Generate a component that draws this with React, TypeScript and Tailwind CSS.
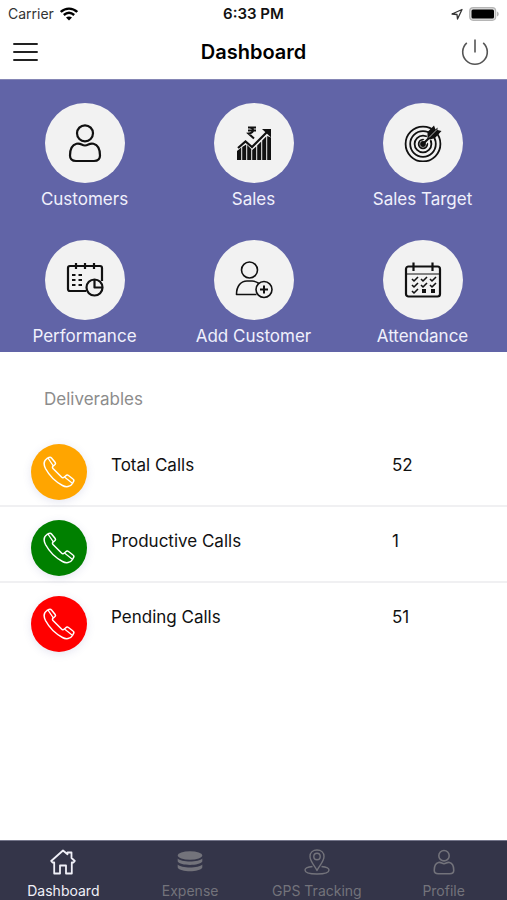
import type { ReactNode } from "react";

function PersonIcon({ size, weight }: { size: number; weight: number }) {
  return (
    <svg width={size} height={size} viewBox="0 0 40 40" fill="none" stroke="currentColor" strokeWidth={weight} strokeLinejoin="round" aria-hidden="true">
      <circle cx="20" cy="10.300" r="8" />
      <path d="M11.500 20.800C16 19.800 16.500 22.500 20 22.500C23.500 22.500 24 19.800 28.500 20.800C33 22 35 27 35 32.500C35 36.500 33 38 29 38H11C7 38 5 36.500 5 32.500C5 27 7 22 11.500 20.800Z" />
    </svg>
  );
}

function SalesIcon() {
  return (
    <svg width="36" height="36" viewBox="0 0 36 36" fill="none" stroke="currentColor" aria-hidden="true">
      <path d="M12 2.500H20M12 5.500H20M13 2.500C18 2 19 8 12.500 8.500L18 13.500" strokeWidth="2" />
      <path d="M2 23L9.500 16.500L16 22L31 7" strokeWidth="2.200" />
      <path d="M26 4H35V12.500Z" fill="currentColor" stroke="none" />
      <path d="M1 26L5.200 22.500V35H1ZM6.200 22L10.200 19.500V35H6.200ZM11.200 20L15.200 24V35H11.200ZM16.200 25L20.200 21.500V35H16.200ZM21.200 20.500L25.200 16.500V35H21.200ZM26.200 15.500L30.200 11.500V35H26.200ZM31.200 11L35 12.500V35H31.200Z" fill="currentColor" stroke="none" />
    </svg>
  );
}

function TargetIcon() {
  return (
    <svg width="38" height="38" viewBox="0 0 38 38" fill="none" stroke="currentColor" strokeWidth="1.800" aria-hidden="true">
      <circle cx="19" cy="20" r="17.400" />
      <circle cx="19" cy="20" r="12.800" />
      <circle cx="19" cy="20" r="8.400" />
      <circle cx="19" cy="20" r="4.300" />
      <path d="M20 19L35 4" stroke="#f2f2f2" strokeWidth="5" />
      <circle cx="19" cy="20" r="2" fill="currentColor" />
      <path d="M19 20L32 7" strokeWidth="2.200" />
      <path d="M23.500 14.500L23.500 8L30 1.500L31.500 5.500L33.500 3.500L33.500 6L37.500 7L31 14L26 15.500Z" fill="currentColor" stroke="none" />
      <path d="M25 13.500L33 5.500" stroke="#f2f2f2" strokeWidth="0.700" />
    </svg>
  );
}

function PerformanceIcon() {
  return (
    <svg width="38" height="36" viewBox="0 0 38 36" fill="none" stroke="currentColor" strokeWidth="2.200" strokeLinejoin="round" aria-hidden="true">
      <path d="M20 29H4Q2 29 2 27V6Q2 4 4 4H34Q36 4 36 6V19" />
      <path d="M10 1V7M19 1V7M28 1V7" />
      <path d="M6 13H9.500M12.500 13H16M6 18H9.500M12.500 18H16M6 23H9.500M12.500 23H16" />
      <circle cx="28.500" cy="25.500" r="8" />
      <path d="M28.500 17.500V25.500H36.500" />
    </svg>
  );
}

function AddCustomerIcon() {
  return (
    <svg width="38" height="38" viewBox="0 0 38 38" fill="none" stroke="currentColor" strokeWidth="1.600" strokeLinejoin="round" aria-hidden="true">
      <circle cx="14.500" cy="9" r="8" />
      <path d="M21.500 33.500H1.500C1.500 25 6 20 12 20H17C19.500 20 22 21 24 22.500" />
      <circle cx="29" cy="28.500" r="8" />
      <path d="M29 24.500V32.500M25 28.500H33" strokeWidth="2" />
    </svg>
  );
}

function AttendanceIcon() {
  return (
    <svg width="38" height="36" viewBox="0 0 38 36" fill="none" stroke="currentColor" strokeWidth="2.200" strokeLinejoin="round" aria-hidden="true">
      <rect x="2" y="4.500" width="34" height="30" rx="2.500" />
      <path d="M9.500 0.500V9M28.500 0.500V9" />
      <path d="M2 12H36" strokeWidth="1.200" />
      <path d="M8 17L10 19L14 15M17 17L19 19L23 15M26 17L28 19L32 15M8 23L10 25L14 21M17 23L19 25L23 21M26 23L28 25L32 21M8 29L10 31L14 27" strokeWidth="1.600" />
      <path d="M18 27H22V31H18ZM27 27H31V31H27Z" fill="currentColor" stroke="none" />
    </svg>
  );
}

function PhoneIcon() {
  return (
    <svg width="32" height="32" viewBox="0 0 32 32" fill="none" stroke="currentColor" strokeWidth="1.500" strokeLinejoin="round" aria-hidden="true">
      <path d="M4 2.500L6 1.500Q7.500 0.800 8.500 2L12.200 6.500Q13 8 11.500 9L10 10.200Q9 11 10 12.500L18.500 21Q20 22.500 21 21.300L22.500 20Q24 18.500 25.500 19.500L30 23Q31.500 24 30.500 25.500L29.500 27.500C27.500 31 23 31.500 19.500 29.500C13 26 6 19 2.500 12.500C0.500 8.500 1 4.500 4 2.500Z" />
      <path d="M5 2.200L10.300 9.800M21.500 21L29.300 27.300" strokeWidth="1.200" />
    </svg>
  );
}

function HomeIcon() {
  return (
    <svg width="26" height="26" viewBox="0 0 26 26" fill="none" stroke="currentColor" strokeWidth="1.800" strokeLinejoin="round" aria-hidden="true">
      <path d="M1.200 12L13 1.500L17.500 5.200V3.500H21.500V9L24.800 12L23.500 13.500H21.800V24.500H16V16.500H10V24.500H4.200V13.500H2.500Z" />
    </svg>
  );
}

function ExpenseIcon() {
  return (
    <svg width="26" height="26" viewBox="0 0 26 26" fill="currentColor" aria-hidden="true">
      <ellipse cx="13" cy="6.500" rx="12.300" ry="4.200" />
      <path d="M0.700 9.500C4 13.500 22 13.500 25.300 9.500V12.500C23 17 3 17 0.700 12.500Z" />
      <path d="M0.700 15.500C4 19.500 22 19.500 25.300 15.500V18.500C23 23.500 3 23.500 0.700 18.500Z" />
    </svg>
  );
}

function TrackingIcon() {
  return (
    <svg width="26" height="26" viewBox="0 0 26 26" fill="none" stroke="currentColor" strokeWidth="1.400" strokeLinejoin="round" aria-hidden="true">
      <path d="M13 21.500C11 17 6 12.500 6 7.500C6 3.500 9 1 13 1C17 1 20 3.500 20 7.500C20 12.500 15 17 13 21.500Z" />
      <circle cx="13" cy="7.500" r="3.200" />
      <path d="M8.500 17.500C3.500 18 1 19.300 1 21C1 23.500 6 25 13 25C20 25 25 23.500 25 21C25 19.300 22.500 18 17.500 17.500" />
    </svg>
  );
}

const tiles: { label: string; icon: ReactNode }[] = [
  { label: "Customers", icon: <PersonIcon size={40} weight={2.2} /> },
  { label: "Sales", icon: <SalesIcon /> },
  { label: "Sales Target", icon: <TargetIcon /> },
  { label: "Performance", icon: <PerformanceIcon /> },
  { label: "Add Customer", icon: <AddCustomerIcon /> },
  { label: "Attendance", icon: <AttendanceIcon /> },
];

const calls = [
  { label: "Total Calls", value: "52", color: "bg-[#ffa500]" },
  { label: "Productive Calls", value: "1", color: "bg-[#008000]" },
  { label: "Pending Calls", value: "51", color: "bg-[#ff0000]" },
];

const tabs: { label: string; icon: ReactNode; color: string }[] = [
  { label: "Dashboard", icon: <HomeIcon />, color: "text-[#f0f0f8]" },
  { label: "Expense", icon: <ExpenseIcon />, color: "text-[#73737b]" },
  { label: "GPS Tracking", icon: <TrackingIcon />, color: "text-[#73737b]" },
  { label: "Profile", icon: <PersonIcon size={26} weight={2.4} />, color: "text-[#73737b]" },
];

export default function App() {
  return (
    <div className="flex min-h-screen flex-col bg-white font-['Inter','Liberation_Sans',sans-serif] text-[#111111]">
      <div className="grid h-7 grid-cols-3 items-center px-2 text-sm">
        <div className="flex items-center gap-[6px]">
          <span className="text-[#333333]">Carrier</span>
          <svg width="18" height="14" viewBox="0 0 18 14" fill="none" stroke="#000000" strokeWidth="2.400" aria-hidden="true">
            <path d="M0.800 5C5.500 0.500 12.500 0.500 17.200 5M3.800 8C7 5.200 11 5.200 14.200 8" />
            <path d="M9 13.500L6 10.500C7.700 9 10.300 9 12 10.500Z" fill="#000000" stroke="none" />
          </svg>
        </div>
        <span className="text-center text-[15px] font-semibold">6:33 PM</span>
        <div className="flex items-center justify-end gap-[6px]">
          <svg width="12" height="12" viewBox="0 0 12 12" fill="none" stroke="#333333" strokeWidth="1.300" strokeLinejoin="round" aria-hidden="true">
            <path d="M11 1.500L1 6L6 6.500L6.500 11Z" />
          </svg>
          <svg width="30" height="14" viewBox="0 0 30 14" aria-hidden="true">
            <rect x="0.700" y="0.700" width="26" height="12.600" rx="3.500" fill="#dddddd" stroke="#b5b5b5" strokeWidth="1.200" />
            <rect x="2.500" y="2.500" width="22.500" height="9" rx="1.500" fill="#000000" />
            <path d="M28 4.500C30.300 5.500 30.300 8.500 28 9.500Z" fill="#b5b5b5" />
          </svg>
        </div>
      </div>

      <header className="flex h-[51px] items-center justify-between pr-[18px] pb-[3px] pl-[13px]">
        <button type="button" aria-label="Menu" className="flex w-[33px] items-center">
          <svg width="25" height="20" viewBox="0 0 25 20" stroke="#222222" strokeWidth="1.900" strokeLinecap="round" aria-hidden="true">
            <path d="M1 2H24M1 10H24M1 18H24" />
          </svg>
        </button>
        <h1 className="text-xl font-semibold text-black">Dashboard</h1>
        <button type="button" aria-label="Log out" className="flex w-7 items-center">
          <svg width="28" height="28" viewBox="0 0 28 28" fill="none" stroke="#555555" strokeWidth="1.600" aria-hidden="true">
            <path d="M14 1.500V14.500M5.800 4.800A12.300 12.300 0 1 0 22.200 4.800" />
          </svg>
        </button>
      </header>

      <main className="flex-1">
        <section className="grid grid-cols-3 gap-y-[25px] border-t border-[#8586b5] bg-[#6164a7] pt-[23px]">
          {tiles.map((tile) => (
            <button key={tile.label} type="button" className="flex flex-col items-center">
              <span className="flex size-20 items-center justify-center rounded-full bg-[#f2f2f2] text-[#111111]">{tile.icon}</span>
              <span className="text-[17px] leading-8 text-[#f0f0fc]">{tile.label}</span>
            </button>
          ))}
        </section>

        <section>
          <h2 className="pt-[35px] pb-5 pl-11 text-[17px] leading-6 text-[#8c8c8c]">Deliverables</h2>
          <ul className="divide-y-2 divide-[#f0f0f2]">
            {calls.map((call) => (
              <li key={call.label} className="flex gap-6 pt-[13px] pb-[5px] pl-[31px]">
                <span className={`flex size-14 items-center justify-center rounded-full text-white shadow-[0_2px_8px_rgba(80,90,160,0.15)] ${call.color}`}>
                  <PhoneIcon />
                </span>
                <span className="flex-1 pt-[9px] text-[17px] leading-6">{call.label}</span>
                <span className="w-[115px] pt-[9px] text-[17px] leading-6">{call.value}</span>
              </li>
            ))}
          </ul>
        </section>
      </main>

      <nav className="grid h-[60px] grid-cols-4 border-t border-[#74758a] bg-[#343549]">
        {tabs.map((tab) => (
          <a key={tab.label} href="#" className={`flex flex-col items-center pt-2 text-sm ${tab.color}`}>
            {tab.icon}
            <span className="pt-[6px] leading-5">{tab.label}</span>
          </a>
        ))}
      </nav>
    </div>
  );
}
